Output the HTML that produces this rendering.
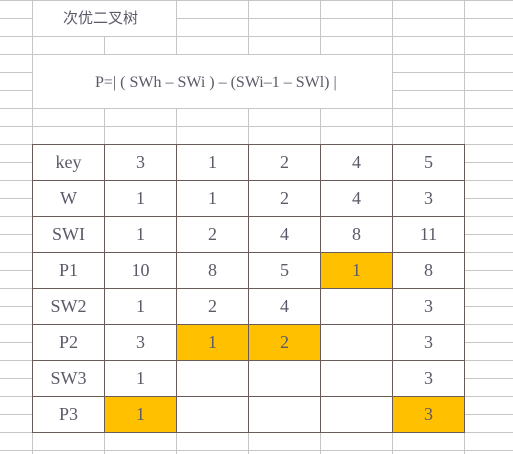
<!DOCTYPE html>
<html><head><style>
body{margin:0;width:513px;height:454px;overflow:hidden;background:#fff;position:relative;font-family:"Liberation Serif","Noto Serif CJK SC",serif;color:#5a5a68}
.g{position:absolute;left:0;top:0;width:513px;height:454px;
background-image:repeating-linear-gradient(to bottom,#c6c6c6 0,#c6c6c6 1px,transparent 1px,transparent 18px),
linear-gradient(#c6c6c6,#c6c6c6),linear-gradient(#c6c6c6,#c6c6c6),linear-gradient(#c6c6c6,#c6c6c6),linear-gradient(#c6c6c6,#c6c6c6),linear-gradient(#c6c6c6,#c6c6c6),linear-gradient(#c6c6c6,#c6c6c6),linear-gradient(#c6c6c6,#c6c6c6);
background-size:100% 100%,1px 100%,1px 100%,1px 100%,1px 100%,1px 100%,1px 100%,1px 100%;
background-position:0 0,32px 0,104px 0,176px 0,248px 0,320px 0,392px 0,464px 0;background-repeat:no-repeat}
.w{position:absolute;background:#fff}
table{position:absolute;left:32px;top:144px;border-collapse:collapse}
td{border:1px solid #6a5a58;width:71px;height:35px;padding:0;text-align:center;font-size:18px;background:#fff}
td.o{background:#ffc000}
</style></head><body>
<div class="g"></div>
<div class="w" style="left:33px;top:1px;width:143px;height:35px;font-family:'Liberation Sans','Noto Sans CJK SC',sans-serif;font-size:15px;line-height:36px;text-indent:30px;color:#5a5a68">次优二叉树</div>
<div class="w" style="left:33px;top:55px;width:359px;height:53px;line-height:56px;font-size:16px;text-indent:62px">P=| ( SWh – SWi ) – (SWi–1 – SWl) |</div>
<table>
<tr><td>key</td><td>3</td><td>1</td><td>2</td><td>4</td><td>5</td></tr>
<tr><td>W</td><td>1</td><td>1</td><td>2</td><td>4</td><td>3</td></tr>
<tr><td>SWI</td><td>1</td><td>2</td><td>4</td><td>8</td><td>11</td></tr>
<tr><td>P1</td><td>10</td><td>8</td><td>5</td><td class="o">1</td><td>8</td></tr>
<tr><td>SW2</td><td>1</td><td>2</td><td>4</td><td></td><td>3</td></tr>
<tr><td>P2</td><td>3</td><td class="o">1</td><td class="o">2</td><td></td><td>3</td></tr>
<tr><td>SW3</td><td>1</td><td></td><td></td><td></td><td>3</td></tr>
<tr><td>P3</td><td class="o">1</td><td></td><td></td><td></td><td class="o">3</td></tr>
</table>
</body></html>
